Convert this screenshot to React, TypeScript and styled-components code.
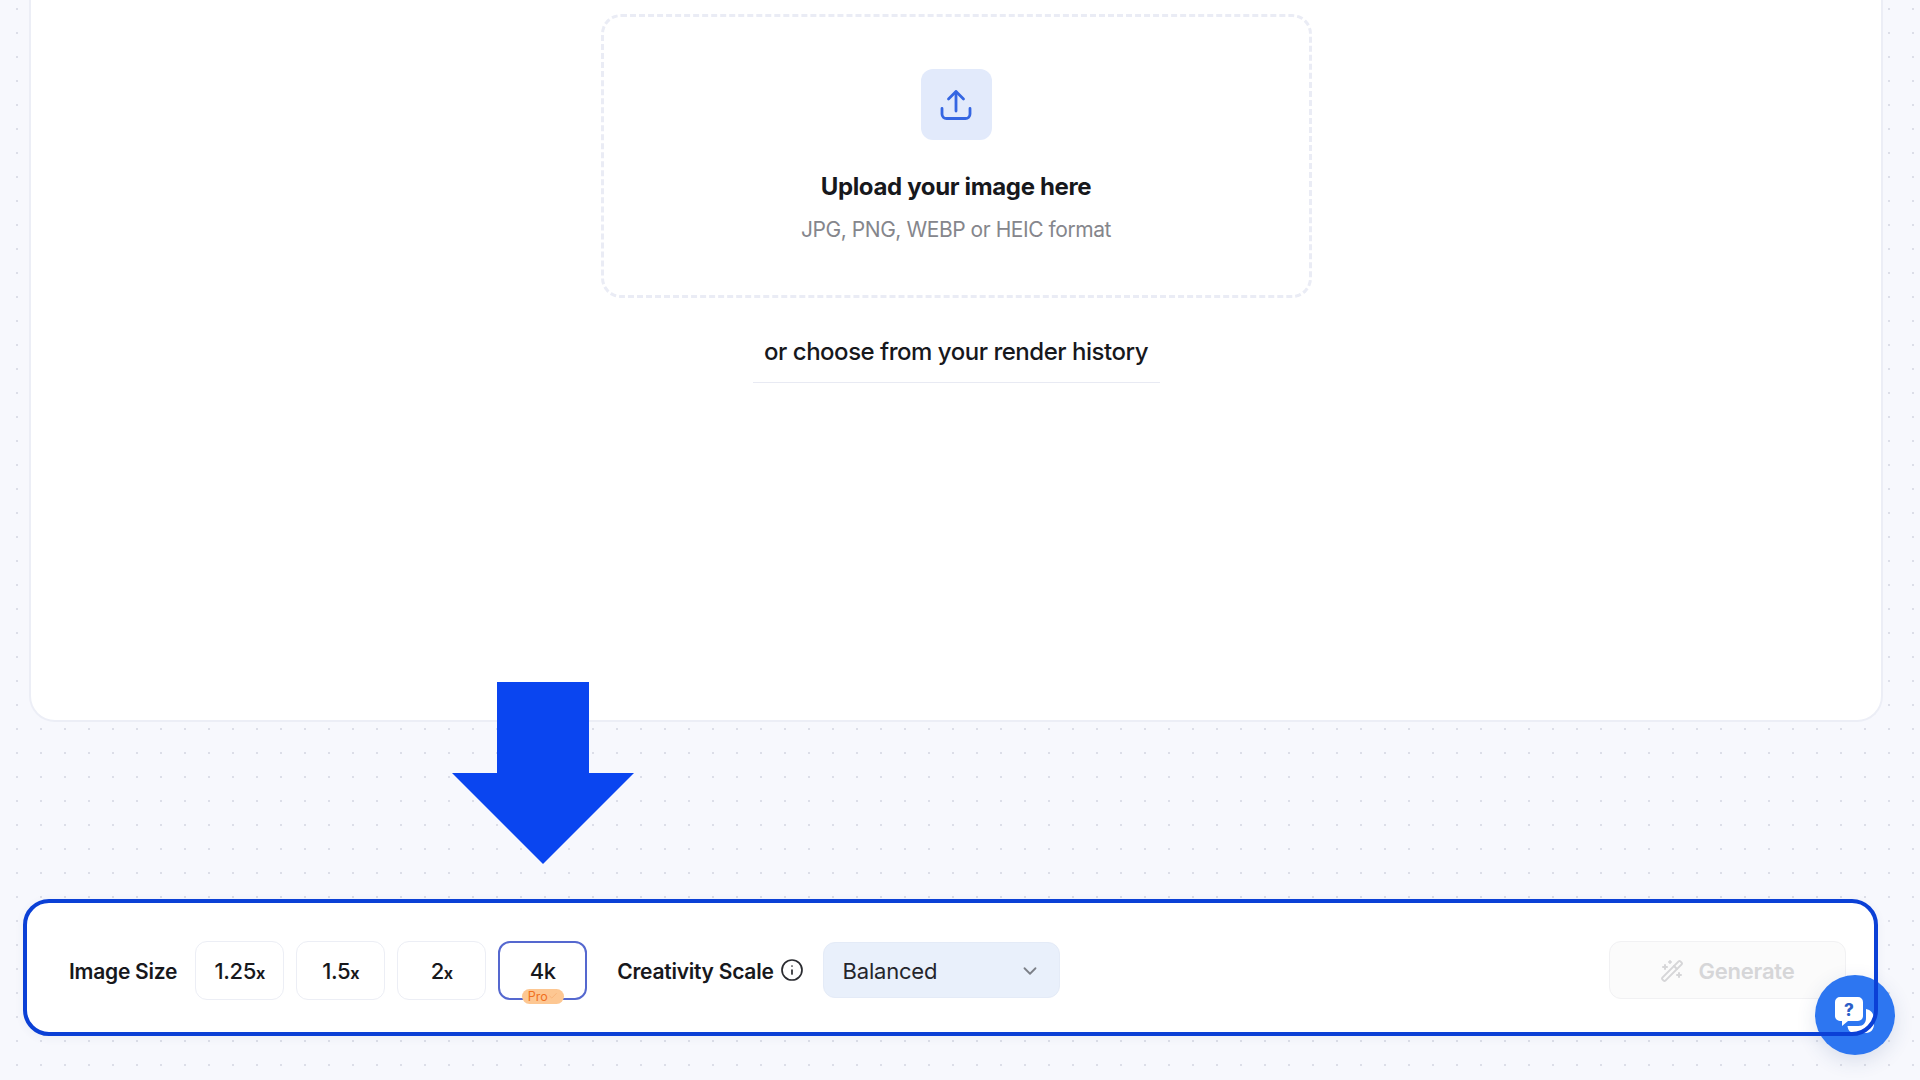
import React from "react"
import styled, { createGlobalStyle } from "styled-components"
import { Check, ChevronDown, Info, WandSparkles } from "lucide-react"

const GlobalStyle = createGlobalStyle`
  html, body {
    margin: 0;
    height: 100%;
    overflow: hidden;
  }
  * {
    box-sizing: border-box;
  }
  body {
    font-family: Inter, "Liberation Sans", sans-serif;
    color: #17181c;
  }
`

const Page = styled.div`
  position: relative;
  width: 1920px;
  height: 1080px;
  overflow: hidden;
  background-color: #f7f8fd;
  background-image: radial-gradient(circle, #dcdee8 1.1px, transparent 1.4px);
  background-size: 24px 24px;
  background-position: 5px -3px;
`

const Card = styled.section`
  height: 722px;
  margin: 0 37px 0 29px;
  padding-top: 14px;
  display: flex;
  flex-direction: column;
  align-items: center;
  background: #fff;
  border: 2px solid #eceef6;
  border-top: none;
  border-radius: 0 0 26px 26px;
`

const DropZone = styled.div`
  width: 711px;
  height: 284px;
  padding-top: 52px;
  display: flex;
  flex-direction: column;
  align-items: center;
  border: 3px dashed #eaecf5;
  border-radius: 20px;
`

const UploadBadge = styled.div`
  width: 71px;
  height: 71px;
  display: flex;
  align-items: center;
  justify-content: center;
  border-radius: 12px;
  background: #e2eafb;
`

const DropTitle = styled.h2`
  margin: 30px 0 0;
  font-size: 24px;
  line-height: 34px;
  font-weight: 700;
  letter-spacing: -0.35px;
`

const DropHint = styled.p`
  margin: 11px 0 0;
  font-size: 21px;
  line-height: 30px;
  font-weight: 400;
  letter-spacing: -0.44px;
  color: #85868c;
`

const HistoryTitle = styled.div`
  width: 407px;
  margin-top: 37px;
  padding-bottom: 14px;
  text-align: center;
  font-size: 24px;
  line-height: 33px;
  font-weight: 500;
  letter-spacing: -0.48px;
  border-bottom: 1.5px solid #e8eaf3;
`

const Toolbar = styled.div`
  position: relative;
  width: 1855px;
  height: 137px;
  margin: 177px 0 0 23px;
  padding: 5px 32px 0 46px;
  display: flex;
  align-items: center;
  background: #fff;
  border-radius: 26px;
  box-shadow: 0 2px 10px rgba(60, 80, 140, 0.06);

  &::after {
    content: "";
    position: absolute;
    inset: 0;
    z-index: 3;
    border: 4px solid #0b40d6;
    border-radius: 26px;
    pointer-events: none;
  }
`

const FieldLabel = styled.span`
  padding-top: 2px;
  font-size: 21px;
  font-weight: 600;
  letter-spacing: -0.25px;
  white-space: nowrap;
`

const SizeGroup = styled.div`
  margin: 0 30px 0 18px;
  display: flex;
  gap: 12px;
`

const SizeButton = styled.button<{ $active?: boolean }>`
  position: relative;
  width: 89px;
  height: 59px;
  padding: 2px 0 0;
  font-family: inherit;
  font-size: 22px;
  font-weight: 500;
  letter-spacing: -0.4px;
  color: #17181c;
  background: #fff;
  border: ${(p) => (p.$active ? "2px solid #5568cf" : "1.5px solid #eceef5")};
  border-radius: 12px;
`

const Times = styled.span`
  font-size: 16px;
  font-weight: 700;
`

const ProBadge = styled.span`
  position: absolute;
  left: 50%;
  bottom: -6px;
  width: 42px;
  height: 15px;
  transform: translateX(-50%);
  display: flex;
  align-items: center;
  justify-content: center;
  font-size: 12.5px;
  font-weight: 400;
  letter-spacing: 0;
  color: #f0701f;
  background: #fdc792;
  border-radius: 8px;
`

const InfoIcon = styled(Info)`
  margin: 0 19px 0 6px;
  flex: none;
  color: #2a2b30;
`

const Select = styled.div`
  width: 237px;
  height: 56px;
  padding: 2px 18px 0 19px;
  display: flex;
  align-items: center;
  justify-content: space-between;
  font-size: 22px;
  letter-spacing: -0.2px;
  color: #24252b;
  background: #e9f0fb;
  border: 1px solid #e4ebf7;
  border-radius: 12px;
`

const GenerateButton = styled.button`
  width: 237px;
  height: 58px;
  margin-left: auto;
  padding-top: 2px;
  display: flex;
  align-items: center;
  justify-content: center;
  gap: 14px;
  font-family: inherit;
  font-size: 22px;
  font-weight: 600;
  letter-spacing: -0.2px;
  color: #d6d6d8;
  background: #fbfbfb;
  border: 1.5px solid #f1f1f3;
  border-radius: 12px;
`

const ChatButton = styled.button`
  position: absolute;
  left: 1815px;
  top: 975px;
  z-index: 2;
  width: 80px;
  height: 80px;
  padding: 0;
  display: flex;
  align-items: center;
  justify-content: center;
  background: #2d76f1;
  border: none;
  border-radius: 50%;
  box-shadow: 0 6px 20px rgba(40, 70, 130, 0.14);
`

const ArrowMark = styled.svg`
  position: absolute;
  left: 452px;
  top: 682px;
  z-index: 2;
`

const UploadGlyph = () => (
  <svg width="36" height="36" viewBox="0 0 36 36" fill="none" stroke="#3566e2" strokeWidth="2.8" strokeLinecap="round" strokeLinejoin="round">
    <path d="M18 5v19" />
    <path d="M10.500 12 18 4.500 25.500 12" />
    <path d="M4 21.500v5.500a4.500 4.500 0 0 0 4.500 4.500h19a4.500 4.500 0 0 0 4.500-4.500v-5.500" />
  </svg>
)

const ChatGlyph = () => (
  <svg width="40" height="37" viewBox="0 0 40 37">
    <path
      fill="#fff"
      d="M5 0h18a5 5 0 0 1 5 5v14a5 5 0 0 1-5 5H13l-6 5v-5H5a5 5 0 0 1-5-5V5a5 5 0 0 1 5-5z"
    />
    <path
      fill="#fff"
      d="M31 12c5 1 8 4.500 8 10v5c0 5-3 9-8 9H20c-4 0-7-2-7.500-7h11c5 0 7.500-3.500 7.500-8z"
    />
    <text x="14" y="18.500" textAnchor="middle" fontFamily="Inter, sans-serif" fontSize="17" fontWeight="800" fill="#2d5fc8">
      ?
    </text>
  </svg>
)

export default function App() {
  return (
    <Page>
      <GlobalStyle />
      <Card>
        <DropZone>
          <UploadBadge>
            <UploadGlyph />
          </UploadBadge>
          <DropTitle>Upload your image here</DropTitle>
          <DropHint>JPG, PNG, WEBP or HEIC format</DropHint>
        </DropZone>
        <HistoryTitle>or choose from your render history</HistoryTitle>
      </Card>

      <ArrowMark width="182" height="182" viewBox="0 0 182 182">
        <path fill="#0a45f0" d="M45 0h92v91h45l-91 91L0 91h45z" />
      </ArrowMark>

      <Toolbar>
        <FieldLabel>Image Size</FieldLabel>
        <SizeGroup>
          <SizeButton>
            1.25<Times>x</Times>
          </SizeButton>
          <SizeButton>
            1.5<Times>x</Times>
          </SizeButton>
          <SizeButton>
            2<Times>x</Times>
          </SizeButton>
          <SizeButton $active>
            4k
            <ProBadge>
              Pro
              <Check size={10} strokeWidth={1.5} color="#f5a96b" />
            </ProBadge>
          </SizeButton>
        </SizeGroup>
        <FieldLabel>Creativity Scale</FieldLabel>
        <InfoIcon size={24} strokeWidth={1.7} />
        <Select>
          Balanced
          <ChevronDown size={22} color="#7d8088" />
        </Select>
        <GenerateButton disabled>
          <WandSparkles size={24} strokeWidth={2} />
          Generate
        </GenerateButton>
      </Toolbar>

      <ChatButton>
        <ChatGlyph />
      </ChatButton>
    </Page>
  )
}
